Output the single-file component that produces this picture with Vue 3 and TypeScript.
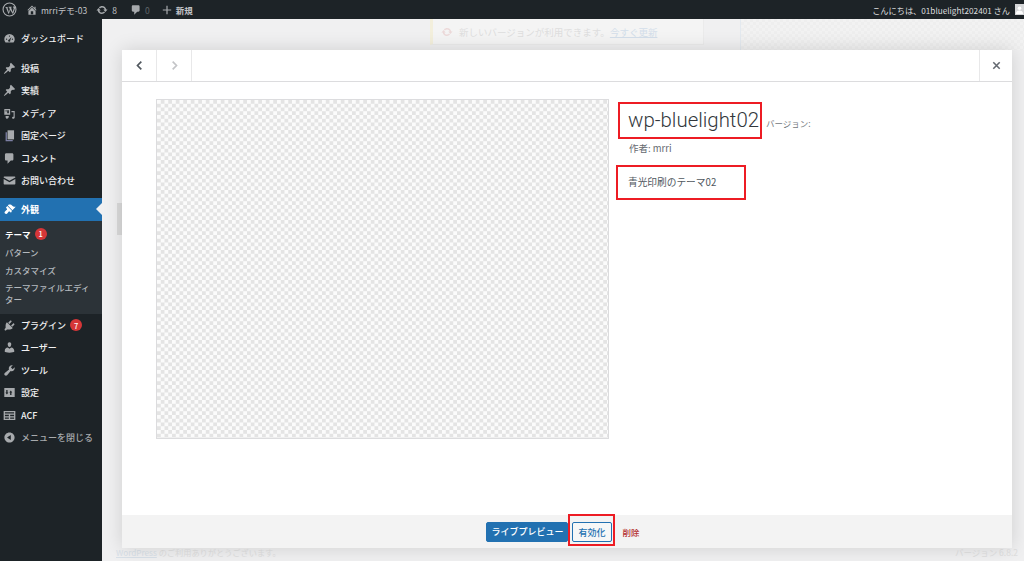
<script setup lang="ts">
const top = [
  { label: 'ダッシュボード', icon: 'dash', mb: 12 },
  { label: '投稿', icon: 'pin' },
  { label: '実績', icon: 'pin' },
  { label: 'メディア', icon: 'media' },
  { label: '固定ページ', icon: 'page' },
  { label: 'コメント', icon: 'comment' },
  { label: 'お問い合わせ', icon: 'mail' },
]
const sub = [
  { label: 'テーマ', current: true, badge: '1' },
  { label: 'パターン' },
  { label: 'カスタマイズ' },
  { label: 'テーマファイルエディター', wide: true },
]
const bottom = [
  { label: 'プラグイン', icon: 'plugin', badge: '7' },
  { label: 'ユーザー', icon: 'user' },
  { label: 'ツール', icon: 'tool' },
  { label: '設定', icon: 'settings' },
  { label: 'ACF', icon: 'acf' },
]
const updatePath = 'M10.2 3.280c3.530 0 6.430 2.610 6.920 6h2.080l-3.500 4-3.500-4h2.320c-.450-1.970-2.210-3.440-4.320-3.440-1.450 0-2.730.710-3.540 1.780L4.950 5.660C6.230 4.200 8.110 3.280 10.200 3.280zm-.400 13.440c-3.520 0-6.430-2.610-6.920-6H.8l3.500-4c1.170 1.330 2.330 2.670 3.500 4H5.480c.450 1.970 2.210 3.440 4.320 3.440 1.450 0 2.730-.710 3.540-1.780l1.710 1.950c-1.280 1.460-3.150 2.380-5.250 2.380z'
</script>

<template>
  <div class="page">
    <header class="bar">
      <div class="bar-left">
        <svg class="wp" viewBox="0 0 20 20"><circle cx="10" cy="10" r="8.6" fill="none" stroke="#a7aaad" stroke-width="1.5"/><path d="M4 6.500h4.200v.6l-1 .2 2 6 1.200-3.600-.9-2.400-.8-.2v-.6h4.400v.6l-1 .2 2 6 1.400-4.400c.3-1.100-.3-1.700-.9-1.900V6h3l.4.8-3.100 8.800h-.8L11 10.500l-1.700 5.100h-.8L5.300 7.300 4 7.100z" fill="#a7aaad"/></svg>
        <span class="bar-item site">
          <svg class="ic12" viewBox="0 0 20 20"><path d="M16 8.500l1.530 1.530-1.060 1.060L10 4.620l-6.470 6.470-1.060-1.060L10 2.500l4 4v-2h2v4zm-6-2.460l6 5.990V18H4v-5.970zM12 17v-5H8v5h4z" fill="#a7aaad"/></svg>
          <span>mrriデモ-03</span>
        </span>
        <span class="bar-item upd">
          <svg class="ic12" viewBox="0 0 20 20"><path :d="updatePath" fill="#a7aaad"/></svg>
          <span>8</span>
        </span>
        <span class="bar-item cmt">
          <svg class="ic12" viewBox="0 0 20 20"><path d="M5 2h9c1.100 0 2 .9 2 2v7c0 1.100-.9 2-2 2h-2l-5 5v-5H5c-1.100 0-2-.9-2-2V4c0-1.100.9-2 2-2z" fill="#a7aaad"/></svg>
          <span class="dim">0</span>
        </span>
        <span class="bar-item new">
          <svg class="ic12" viewBox="0 0 20 20"><path d="M9 3h2v6h6v2h-6v6H9v-6H3V9h6z" fill="#a7aaad"/></svg>
          <b>新規</b>
        </span>
      </div>
      <div class="bar-right">
        <span>こんにちは、01bluelight202401 さん</span>
        <span class="avatar"><svg viewBox="0 0 10 10"><circle cx="5" cy="3.600" r="2" fill="#fff"/><path d="M1 10c0-3 2-4 4-4s4 1 4 4z" fill="#fff"/></svg></span>
      </div>
    </header>

    <div class="main">
      <aside class="side">
        <ul class="menu first">
          <li v-for="m in top" :key="m.label" class="item" :class="{ gap: m.mb }">
            <svg class="mi" viewBox="0 0 20 20"><use :href="'#i-' + m.icon"/></svg>
            <span>{{ m.label }}</span>
          </li>
        </ul>
        <div class="active">
          <svg class="mi" viewBox="0 0 20 20"><path d="M14.480 11.060L7.410 3.990l1.500-1.500c.5-.56 2.300-.47 3.510.32 1.210.8 1.430 1.280 2.910 2.100 1.180.64 2.450 1.260 4.230.85zm-.71.710L6.700 4.700 4.930 6.470c-.39.390-.39 1.020 0 1.410l1.060 1.060c.39.390.39 1.030 0 1.420-.6.600-1.430 1.150-2.210 1.760-.77.620-1.440 1.260-1.440 2.270.01 1.500 1.110 2.500 2.520 2.510 1.010 0 1.650-.67 2.260-1.440.62-.78 1.170-1.610 1.770-2.210.39-.39 1.020-.39 1.410 0l1.060 1.060c.39.390 1.020.39 1.410 0z" fill="#fff"/></svg>
          <span>外観</span>
          <i class="arrow"></i>
        </div>
        <ul class="sub">
          <li v-for="s in sub" :key="s.label" :class="{ current: s.current, wide: s.wide }">
            {{ s.label }}<span v-if="s.badge" class="badge">{{ s.badge }}</span>
          </li>
        </ul>
        <ul class="menu">
          <li v-for="m in bottom" :key="m.label" class="item">
            <svg class="mi" viewBox="0 0 20 20"><use :href="'#i-' + m.icon"/></svg>
            <span>{{ m.label }}</span>
            <span v-if="m.badge" class="badge">{{ m.badge }}</span>
          </li>
          <li class="item collapse">
            <svg class="mi" viewBox="0 0 20 20"><path d="M10 2.160c4.330 0 7.840 3.510 7.840 7.840s-3.510 7.840-7.840 7.840S2.160 14.330 2.160 10 5.670 2.160 10 2.160zm2 11.720V6.120L6.180 10z" fill="#a7aaad" fill-rule="evenodd"/></svg>
            <span>メニューを閉じる</span>
          </li>
        </ul>
      </aside>

      <main class="content">
        <div class="ghost-notice">
          <svg viewBox="0 0 20 20"><path :d="updatePath" fill="#ecd9d9"/></svg>
          <span>新しいバージョンが利用できます。<u>今すぐ更新</u></span>
        </div>
        <div class="ghost-card"></div>
        <div class="ghost-thumb"></div>
        <div class="ghost-foot"><u>WordPress</u> のご利用ありがとうございます。</div>
        <div class="ghost-ver">バージョン 6.8.2</div>

        <section class="modal">
          <div class="m-head">
            <button class="nav">
              <svg viewBox="0 0 12 12"><path d="M8 1.800 3.800 6 8 10.200" fill="none" stroke="#50575e" stroke-width="1.800"/></svg>
            </button>
            <button class="nav">
              <svg viewBox="0 0 12 12"><path d="M4 1.800 8.200 6 4 10.200" fill="none" stroke="#c3c4c7" stroke-width="1.800"/></svg>
            </button>
            <span class="spacer"></span>
            <button class="close">
              <svg viewBox="0 0 12 12"><path d="M2.500 2.500l7 7m0-7-7 7" fill="none" stroke="#646970" stroke-width="1.700"/></svg>
            </button>
          </div>
          <div class="m-body">
            <div class="shot"></div>
            <div class="info">
              <div class="title-row">
                <h2 class="name mark">wp-bluelight02</h2>
                <span class="ver">バージョン:</span>
              </div>
              <p class="author">作者: mrri</p>
              <p class="desc mark">青光印刷のテーマ02</p>
            </div>
          </div>
          <div class="m-foot">
            <button class="primary">ライブプレビュー</button>
            <span class="mark act"><button class="secondary">有効化</button></span>
            <a class="del">削除</a>
          </div>
        </section>
      </main>
    </div>

    <svg width="0" height="0" class="defs">
      <symbol id="i-dash" viewBox="0 0 20 20"><path fill-rule="evenodd" fill="#a7aaad" d="M10 3a8 8 0 0 1 8 8c0 2-.7 3.800-1.900 5H3.900A7.900 7.900 0 0 1 2 11a8 8 0 0 1 8-8zM10 5.200a1 1 0 1 0 0 2 1 1 0 0 0 0-2zM5.500 10a1 1 0 1 0 0 2 1 1 0 0 0 0-2zm9 0a1 1 0 1 0 0 2 1 1 0 0 0 0-2zM13 7.500l-3.600 4a1.700 1.700 0 1 0 1.700 1z"/></symbol>
      <symbol id="i-pin" viewBox="0 0 20 20"><path fill="#a7aaad" d="M10.440 3.020l1.820-1.820 6.360 6.350-1.830 1.820c-1.050-.68-2.480-.57-3.410.36l-.75.75c-.92.93-1.040 2.350-.35 3.410l-1.830 1.820-2.410-2.410-2.800 2.790c-.42.42-3.380 2.710-3.800 2.290s1.860-3.390 2.280-3.810l2.790-2.790L4.100 9.360l1.830-1.820c1.050.69 2.480.57 3.400-.36l.75-.75c.93-.92 1.050-2.350.36-3.410z"/></symbol>
      <symbol id="i-media" viewBox="0 0 20 20"><path fill="#a7aaad" fill-rule="evenodd" d="M2 3h9v9H2zm2 2v2h1.500V5zm2.500 0v4.500H9V5zM13 6h5v10c0 1.500-1.300 2-2.300 2s-1.700-.7-1.700-1.500c0-1 1-1.700 2.300-1.500V8h-3.300zM4 14h5c0 2.500-1 4-3 4s-2-2-2-4z"/></symbol>
      <symbol id="i-page" viewBox="0 0 20 20"><path fill="#a7aaad" d="M7 2h10v14H7z"/><path fill="#7c7fa3" d="M4 5h2v12h9v2H4z"/></symbol>
      <symbol id="i-comment" viewBox="0 0 20 20"><path fill="#a7aaad" d="M5 2h9c1.100 0 2 .9 2 2v7c0 1.100-.9 2-2 2h-2l-5 5v-5H5c-1.100 0-2-.9-2-2V4c0-1.100.9-2 2-2z"/></symbol>
      <symbol id="i-mail" viewBox="0 0 20 20"><path fill="#a7aaad" d="M2 4h16c.6 0 1 .4 1 1v.5l-9 5-9-5V5c0-.6.400-1 1-1zm-1 3.500 9 5 9-5V15c0 .6-.4 1-1 1H2c-.6 0-1-.4-1-1z"/></symbol>
      <symbol id="i-plugin" viewBox="0 0 20 20"><path fill="#a7aaad" d="M13.110 4.360L9.870 7.600 8 5.730l3.240-3.240c.35-.34 1.050-.2 1.560.32.520.51.660 1.210.31 1.550zm-8 1.770l.91-1.120 9.010 9.010-1.190.84c-.71.71-2.630 1.160-3.820 1.160H6.140L4.900 17.260c-.59.590-1.540.59-2.120 0-.59-.58-.59-1.530 0-2.120l1.240-1.240v-3.880c0-1.130.4-3.050 1.090-3.890zm7.260 3.970l3.240-3.240c.34-.35 1.040-.21 1.550.31.520.51.660 1.210.31 1.560l-3.240 3.240z"/></symbol>
      <symbol id="i-user" viewBox="0 0 20 20"><path fill="#a7aaad" d="M10 9.250c-2.270 0-2.730-3.440-2.730-3.440C7 4.020 7.820 2 9.970 2c2.160 0 2.980 2.020 2.710 3.810 0 0-.41 3.440-2.680 3.440zm0 2.570L12.720 10c2.390 0 4.520 2.330 4.520 4.530v2.490s-3.650 1.130-7.240 1.130c-3.650 0-7.240-1.130-7.240-1.130v-2.490c0-2.250 1.940-4.480 4.470-4.480z"/></symbol>
      <symbol id="i-tool" viewBox="0 0 20 20"><path fill="#a7aaad" d="M16.680 9.770c-1.340 1.340-3.300 1.670-4.950.99l-5.410 6.520c-.99.99-2.590.99-3.570 0-.99-.98-.99-2.580 0-3.570l6.520-5.420c-.68-1.650-.35-3.610.99-4.950 1.280-1.280 3.120-1.620 4.720-1.060l-2.890 2.890 2.820 2.820 2.860-2.870c.53 1.580.18 3.400-1.090 4.650z"/></symbol>
      <symbol id="i-settings" viewBox="0 0 20 20"><path fill="#a7aaad" fill-rule="evenodd" d="M2 3h16v14H2zm3 3v4H3.700l2.300 3 2.300-3H7V6zm6 8v-4H9.700L12 7l2.300 3H13v4z"/></symbol>
      <symbol id="i-acf" viewBox="0 0 20 20"><path fill="#a7aaad" fill-rule="evenodd" d="M1 3h18v14H1zm2 2v2h14V5zm0 4v2h6V9zm8 0v2h6V9zm-8 4v2h6v-2zm8 0v2h6v-2z"/></symbol>
    </svg>
  </div>
</template>

<style>
html, body { margin: 0; padding: 0; background: #f0f0f1; }
</style>

<style scoped>
* { box-sizing: border-box; }
.page {
  width: 1024px; height: 561px; overflow: hidden; display: flex; flex-direction: column;
  font-family: "Noto Sans CJK JP", "Noto Sans", sans-serif; font-size: 9px; color: #3c434a;
}
.defs { position: absolute; }
ul { list-style: none; margin: 0; padding: 0; }

.bar { height: 19px; flex: none; background: #1d2327; display: flex; justify-content: space-between; align-items: center; color: #c3c4c7; font-size: 8.500px; }
.bar-left { display: flex; align-items: center; }
.wp { width: 15px; height: 15px; margin-left: 2px; }
.bar-item { display: flex; align-items: center; gap: 3px; }
.site { margin-left: 9px; }
.upd { margin-left: 9px; gap: 4px; }
.cmt { margin-left: 13px; }
.new { margin-left: 11px; gap: 3px; }
.new b { font-weight: 700; }
.dim { color: #5f6468; }
.ic12 { width: 12px; height: 12px; }
.bar-right { display: flex; align-items: center; gap: 5px; font-size: 8.200px; color: #dcdcde; }
.avatar { width: 9px; height: 11px; background: #d5d6d8; display: block; }
.avatar svg { display: block; width: 9px; height: 11px; }

.main { flex: 1; display: flex; min-height: 0; }
.side { width: 102px; flex: none; background: #1d2327; color: #f0f0f1; padding-top: 8px; font-size: 9px; font-weight: 500; }
.item { height: 22.500px; display: flex; align-items: center; padding-left: 3px; gap: 5px; }
.item.gap { margin-bottom: 7.500px; }
.mi { width: 13px; height: 13px; flex: none; }
.menu.first { margin-bottom: 6px; }
.active { height: 23px; background: #2271b1; color: #fff; display: flex; align-items: center; padding-left: 3px; gap: 5px; position: relative; font-weight: 700; }
.arrow { position: absolute; right: 0; top: 5px; border: 6px solid transparent; border-right-color: #f0f0f1; border-left-width: 0; }
.sub { background: #2c3338; height: 93px; padding: 3.500px 0 0 5px; color: #b4b9be; font-size: 8.500px; }
.sub li { height: 18.300px; display: flex; align-items: center; }
.sub li.current { color: #fff; font-weight: 700; }
.sub li.wide { height: auto; line-height: 12px; display: block; padding-top: 2px; width: 92px; }
.badge { display: inline-flex; width: 12px; height: 12px; border-radius: 50%; background: #d63638; color: #fff; font-size: 7.500px; font-weight: 500; justify-content: center; align-items: center; margin-left: 4px; }
.item .badge { margin-left: -1px; }
.collapse { color: #a7aaad; }

.content { flex: 1; background: #f0f0f1; position: relative; overflow: hidden; }
.ghost-notice { position: absolute; left: 328px; top: 0; width: 274px; height: 26px; background: #f4f4f4; border-left: 3px solid #f3efdc; border-bottom: 1px solid #ebebeb; border-right: 1px solid #ebebeb; display: flex; align-items: center; gap: 6px; padding-left: 8px; color: #dedede; font-size: 9.500px; }
.ghost-notice svg { width: 12px; height: 12px; }
.ghost-notice u { color: #d3deea; }
.ghost-card { position: absolute; left: 638px; top: 0; width: 284px; height: 31px; border-left: 1px solid #e3e9ef; background: repeating-conic-gradient(#eeeeee 0 25%, #f2f2f2 0 50%) 0 0 / 6px 6px; }
.ghost-thumb { position: absolute; left: 15px; top: 184px; width: 5px; height: 32px; background: #dadada; }
.ghost-foot { position: absolute; left: 14px; bottom: 3px; font-size: 8.200px; color: #dfdfdf; }
.ghost-foot u { color: #d8e0e8; }
.ghost-ver { position: absolute; right: 6px; bottom: 3px; font-size: 8.500px; color: #dfdfdf; }

.modal { position: absolute; left: 20px; top: 31px; width: 890px; height: 498px; background: #fff; display: flex; flex-direction: column; box-shadow: 0 0 18px rgba(0,0,0,.14); }
.m-head { height: 32px; flex: none; display: flex; border-bottom: 1px solid #dcdcde; }
button { font: inherit; padding: 0; }
.nav, .close { background: #fff; border: 0; border-right: 1px solid #e8e8e9; width: 35px; display: flex; align-items: center; justify-content: center; }
.nav svg, .close svg { width: 11px; height: 11px; }
.close { border-right: 0; border-left: 1px solid #e8e8e9; width: 33px; }
.spacer { flex: 1; }
.m-body { flex: 1; display: flex; padding: 17px 0 0 34px; min-height: 0; }
.shot { width: 453px; height: 340px; flex: none; border: 1px solid #dcdcde; background: repeating-conic-gradient(#e4e4e4 0 25%, #fbfbfb 0 50%) 0 0 / 7.500px 7.500px; }
.info { margin-left: 20px; width: 400px; }
.title-row { display: flex; align-items: flex-end; margin-left: -11px; }
.mark { border: 2px solid #ed1c24; }
.name { margin: 3px 0 0; width: 144px; height: 37px; font-family: Roboto, sans-serif; font-weight: 300; font-size: 20.400px; color: #32373c; line-height: 33px; padding-left: 8px; white-space: nowrap; }
.ver { font-size: 8.500px; color: #72777c; margin: 0 0 10px 4px; }
.author { margin: 2px 0 0; font-size: 9.500px; color: #646970; }
.desc { margin: 10px 0 0 -13px; width: 130px; height: 35px; line-height: 31px; padding-left: 10px; font-size: 9.700px; color: #50575e; }
.m-foot { height: 33px; flex: none; background: #f3f3f3; display: flex; align-items: center; justify-content: center; padding-right: 8px; font-weight: 500; }
.primary { width: 82px; flex: none; height: 20px; background: #2271b1; border: 1px solid #2271b1; border-radius: 2px; color: #fff; font-size: 9px; font-weight: 500; }
.act { width: 47px; flex: none; height: 32px; align-self: flex-start; margin: -1px 0 0; display: flex; align-items: flex-start; justify-content: center; padding-top: 6px; }
.secondary { width: 40px; flex: none; height: 20px; background: #f6f7f7; border: 1px solid #2271b1; border-radius: 2px; color: #2271b1; font-size: 9px; font-weight: 500; }
.del { color: #b32d2e; font-size: 8.500px; margin-left: 7px; }
</style>
